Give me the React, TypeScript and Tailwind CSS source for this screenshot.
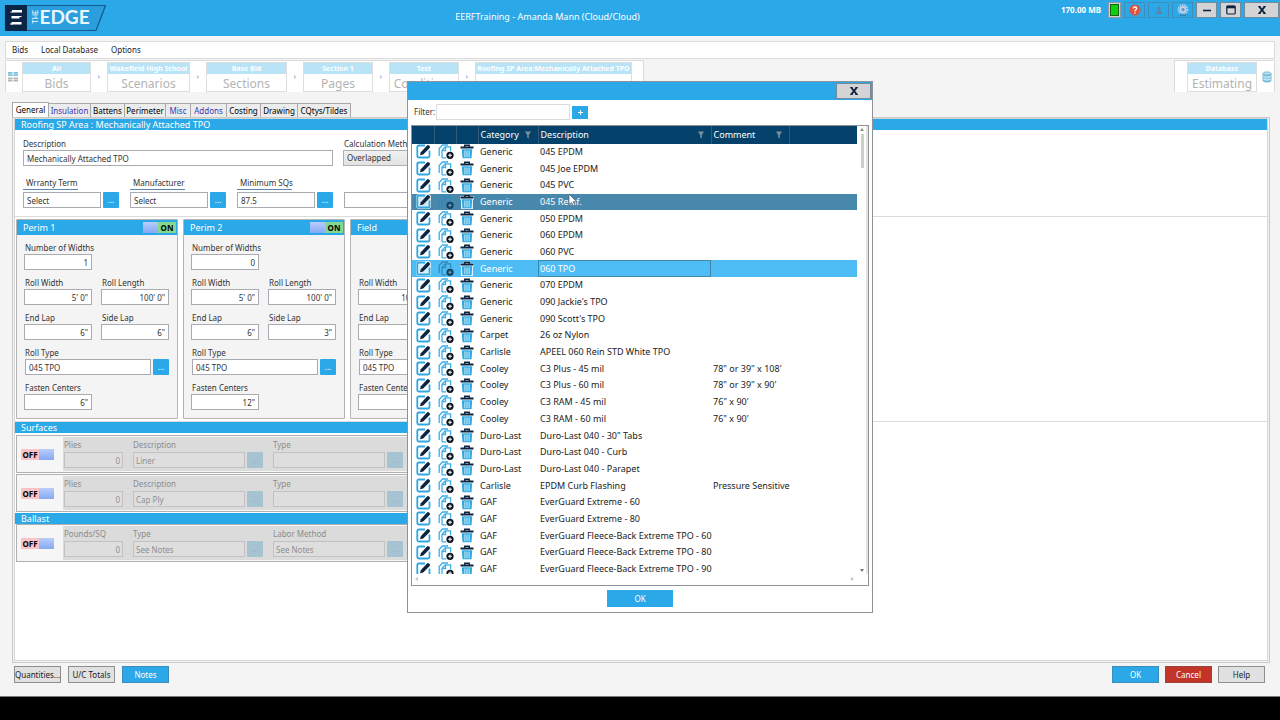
import type { ReactNode } from 'react';

const INPUT =
  'h-4 min-w-0 border border-[#a9abb0] bg-white px-[3px] text-[8px] leading-3 text-[#333] outline-none';

function Logo() {
  return (
    <svg width="104" height="28" viewBox="0 0 104 28" className="shrink-0" role="img" aria-label="The Edge">
      <path d="M1.5 1.5H101.5L92 26.5H1.5Z" fill="#2b9fdd" stroke="#14578a" strokeWidth="1.2" />
      <path d="M1 1H23V27H1Z" fill="#0b2547" />
      <path d="M8 7.200H18M7.500 13.200H15.500M7.500 19.200H17.500" stroke="#fff" strokeWidth="2.600" />
      <path d="M6.500 8H9M14.500 12.500H17.500M6 20H9" stroke="#fff" strokeWidth="1" />
      <text x="35.500" y="19.500" fill="#e9f6fd" fontFamily="Lato, sans-serif" fontWeight="700" fontSize="19">EDGE</text>
      <text transform="rotate(-90 34 19.500)" x="34" y="19.500" fill="#d5edfa" fontFamily="Lato, sans-serif" fontWeight="700" fontSize="7">THE</text>
    </svg>
  );
}

function TitleButton({ label, className, children }: { label: string; className: string; children: ReactNode }) {
  return (
    <button type="button" aria-label={label} className={`flex h-4 items-center justify-center border ${className}`}>
      {children}
    </button>
  );
}

function CloseGlyph() {
  return (
    <svg width="10" height="10" viewBox="0 0 10 10">
      <path d="M2.200 1.500L7.800 8.500M7.800 1.500L2.200 8.500" stroke="#10233f" strokeWidth="2" />
      <path d="M1.200 1.500H3.600M6.400 1.500H8.800M1.200 8.500H3.600M6.400 8.500H8.800" stroke="#10233f" />
    </svg>
  );
}

function TitleBar() {
  const ghost = 'w-[21px] border-[#3c8db9]';
  const solid = 'border-[#6f8b9c] bg-[#d4d4d6]';
  return (
    <header className="flex h-9 items-start bg-[#2ba8e8] text-white">
      <div className="pt-1 pl-1">
        <Logo />
      </div>
      <h1 className="flex-1 pt-[11px] pr-[74px] text-center text-[9px] leading-3">EERFTraining - Amanda Mann (Cloud/Cloud)</h1>
      <div className="flex items-center gap-[3px] pt-[2px] pr-px">
        <span className="pr-1 text-[8px] font-bold">170.00 MB</span>
        <TitleButton label="Connection" className="w-[13px] border-[#8d9aa2] bg-[#cfd6cf]">
          <span className="h-3 w-[9px] border border-[#1d5a1d] bg-[#0bd10b]" />
        </TitleButton>
        <TitleButton label="Alerts" className={ghost}>
          <svg width="12" height="12" viewBox="0 0 12 12">
            <circle cx="6" cy="6" r="5.500" fill="#e0523f" />
            <path d="M4.300 4.600Q4.300 3 6 3T7.700 4.600Q7.700 5.500 6 6.500V7.300M6 8.300V9.500" fill="none" stroke="#fff" strokeWidth="1.300" />
          </svg>
        </TitleButton>
        <TitleButton label="User" className={ghost}>
          <svg width="10" height="10" viewBox="0 0 10 10" fill="#5a84a8">
            <circle cx="5" cy="3.200" r="1.800" />
            <path d="M1.300 9Q2 5.500 5 5.500T8.700 9Z" />
          </svg>
        </TitleButton>
        <TitleButton label="Settings" className={ghost}>
          <svg width="12" height="12" viewBox="0 0 12 12">
            <circle cx="6" cy="5.500" r="4.600" fill="none" stroke="#b9d3ea" strokeWidth="1.600" strokeDasharray="1.600 .9" />
            <circle cx="6" cy="5.500" r="3.800" fill="#b5cfe8" />
            <circle cx="6" cy="5.500" r="1.500" fill="#5794c4" />
            <path d="M3 11H9" stroke="#33648c" />
          </svg>
        </TitleButton>
        <TitleButton label="Minimize" className={`w-[21px] ${solid}`}>
          <svg width="10" height="10" viewBox="0 0 10 10">
            <path d="M1 5.500H9" stroke="#10233f" strokeWidth="1.600" />
          </svg>
        </TitleButton>
        <TitleButton label="Maximize" className={`w-[21px] ${solid}`}>
          <svg width="10" height="10" viewBox="0 0 10 10">
            <rect x=".8" y="1" width="8.400" height="8" rx="1" fill="none" stroke="#10233f" strokeWidth="1.200" />
            <path d="M.8 2H9.200" stroke="#10233f" strokeWidth="2.600" />
          </svg>
        </TitleButton>
        <TitleButton label="Close" className={`w-[35px] ${solid}`}>
          <CloseGlyph />
        </TitleButton>
      </div>
    </header>
  );
}

const CRUMBS = [
  { top: 'All', name: 'Bids', w: 'w-[69px]' },
  { top: 'Wakefield High School', name: 'Scenarios', w: 'w-[83px]' },
  { top: 'Base Bid', name: 'Sections', w: 'w-[81px]' },
  { top: 'Section 1', name: 'Pages', w: 'w-[70px]' },
  { top: 'Test', name: 'Conditions', w: 'w-[70px]' },
  { top: 'Roofing SP Area:Mechanically Attached TPO', name: '', w: 'w-[157px]' },
];

function Crumb({ top, name, w }: { top: string; name: string; w: string }) {
  return (
    <button type="button" className={`${w} flex h-[30px] flex-col overflow-hidden border border-[#dedede] bg-white`}>
      <span className="h-[11px] w-full bg-[#b9e3f6] text-center text-[7px] leading-[11px] font-bold whitespace-nowrap text-white">{top}</span>
      <span className="w-full text-center text-[12px] leading-5 text-[#b3b3b3]">{name}</span>
    </button>
  );
}

function Breadcrumbs() {
  return (
    <div className="flex items-start justify-between">
      <nav aria-label="Breadcrumb" className="flex h-8 items-center border border-b-0 border-[#dcdcdc] bg-white pr-[11px] pl-[2px]">
        <svg width="10" height="10" viewBox="0 0 10 10" className="mr-1">
          <path d="M0 0H4.500V4H0ZM5.500 0H10V4H5.500Z" fill="#7cc0dd" />
          <path d="M0 5.500H4.500V9.500H0ZM5.500 5.500H10V9.500H5.500Z" fill="#b4b4b4" />
          <path d="M0 2H10M0 7.500H10" stroke="#fff" strokeWidth=".5" />
        </svg>
        {CRUMBS.map((c, i) => (
          <div key={c.top} className="flex items-center">
            {i > 0 && (
              <svg width="16" height="6" viewBox="0 0 16 6" aria-hidden="true">
                <path d="M7 1L9.500 3L7 5Z" fill="#c3c9de" />
              </svg>
            )}
            <Crumb {...c} />
          </div>
        ))}
      </nav>
      <div className="flex h-8 items-center border border-b-0 border-[#dcdcdc] bg-white pr-[2px] pl-3">
        <Crumb top="Database" name="Estimating" w="w-[70px]" />
        <svg width="10" height="12" viewBox="0 0 10 12" className="ml-[5px]">
          <path d="M1 2.500V9.500Q1 11 5 11T9 9.500V2.500" fill="#8cc9e4" stroke="#5fa6c8" strokeWidth=".8" />
          <ellipse cx="5" cy="2.500" rx="4" ry="1.600" fill="#b9e0f0" stroke="#5fa6c8" strokeWidth=".8" />
          <path d="M1 5.500Q5 7.500 9 5.500M1 8Q5 10 9 8" fill="none" stroke="#e9f6fb" strokeWidth=".8" />
        </svg>
      </div>
    </div>
  );
}

const TABS = [
  { name: 'General', c: 'h-[15px] w-[37px] border-b-0 bg-white' },
  { name: 'Insulation', c: 'h-[14px] w-[42px] text-[#3a35b5]' },
  { name: 'Battens', c: 'h-[14px] w-[34px]' },
  { name: 'Perimeter', c: 'h-[14px] w-[41px]' },
  { name: 'Misc', c: 'h-[14px] w-[25px] text-[#3a35b5]' },
  { name: 'Addons', c: 'h-[14px] w-[36px] text-[#3a35b5]' },
  { name: 'Costing', c: 'h-[14px] w-[34px]' },
  { name: 'Drawing', c: 'h-[14px] w-[37px]' },
  { name: 'CQtys/Tildes', c: 'h-[14px] w-[53px]' },
];

function Tabs() {
  return (
    <div role="tablist" className="flex items-end">
      {TABS.map((t, i) => (
        <button
          key={t.name}
          type="button"
          role="tab"
          aria-selected={i === 0}
          className={`${t.c} ${i === 0 ? '' : 'border-l-0 bg-[#ececec]'} flex items-center justify-center border border-b-0 border-[#a9a9a9] text-[8px] whitespace-nowrap`}
        >
          {t.name}
        </button>
      ))}
    </div>
  );
}

function SectionBar({ children, className = '' }: { children: ReactNode; className?: string }) {
  return <h2 className={`${className} h-[11px] bg-[#2ba8e8] pl-[6px] text-[9px] leading-[11px] text-white`}>{children}</h2>;
}

function MoreButton({ label, disabled = false }: { label: string; disabled?: boolean }) {
  return (
    <button
      type="button"
      aria-label={label}
      disabled={disabled}
      className={`${disabled ? 'bg-[#a6c3d2] text-[#8fb4c6]' : 'bg-[#2ba8e8] text-white'} ml-[2px] h-4 w-4 shrink-0 rounded-[1px] text-center text-[8px] leading-4`}
    >
      ...
    </button>
  );
}

function LookupField({ label, value }: { label: string; value: string }) {
  return (
    <label className="block">
      <span className="block h-[13px] w-[55px] border-b border-[#5d87ae] pl-[3px] text-[8px] leading-3 whitespace-nowrap">{label}</span>
      <span className="mt-[2px] flex">
        <input className={`${INPUT} w-[78px]`} defaultValue={value} />
        <MoreButton label={`Choose ${label}`} />
      </span>
    </label>
  );
}

function NumberField({ label, value }: { label: string; value: string }) {
  return (
    <label className="block w-[68px]">
      <span className="block pl-px text-[8px] leading-3 whitespace-nowrap">{label}</span>
      <input className={`${INPUT} block w-full text-right`} defaultValue={value} />
    </label>
  );
}

function Switch({ on, label }: { on: boolean; label: string }) {
  const knob = <span className="h-full w-[15px] rounded-[1px] bg-linear-to-b from-[#b9cdfb] to-[#86a9f3]" />;
  return (
    <button
      type="button"
      role="switch"
      aria-checked={on}
      aria-label={label}
      className={`${on ? 'bg-[#84d88f]' : 'bg-[#f9c3c8]'} flex h-[11px] w-[33px] items-center justify-between text-[8px] leading-[11px] font-bold text-black`}
    >
      {on && knob}
      <span className="flex-1 text-center">{on ? 'ON' : 'OFF'}</span>
      {!on && knob}
    </button>
  );
}

type Zone = { name: string; widths?: string; rollWidth: string; rollLength: string; endLap: string; sideLap: string; centers: string };

const ZONES: Zone[] = [
  { name: 'Perim 1', widths: '1', rollWidth: `5' 0"`, rollLength: `100' 0"`, endLap: '6"', sideLap: '6"', centers: '6"' },
  { name: 'Perim 2', widths: '0', rollWidth: `5' 0"`, rollLength: `100' 0"`, endLap: '6"', sideLap: '3"', centers: '12"' },
  { name: 'Field', rollWidth: `10' 0"`, rollLength: `100' 0"`, endLap: '6"', sideLap: '6"', centers: '12"' },
];

function ZonePanel({ zone }: { zone: Zone }) {
  return (
    <section className="w-[162px] shrink-0 rounded-[1px] border border-[#b5b5b5] bg-[#f4f4f4]">
      <div className="flex h-[15px] items-center justify-between bg-[#2ba8e8] pr-px pl-[6px]">
        <h3 className="text-[9px] leading-[15px] text-white">{zone.name}</h3>
        {zone.widths && <Switch on label={zone.name} />}
      </div>
      <div className="grid grid-cols-[68px_68px] gap-x-[9px] gap-y-[7px] px-[7px] pt-[7px] pb-2">
        <div className="col-span-2 h-7">{zone.widths && <NumberField label="Number of Widths" value={zone.widths} />}</div>
        <NumberField label="Roll Width" value={zone.rollWidth} />
        <NumberField label="Roll Length" value={zone.rollLength} />
        <NumberField label="End Lap" value={zone.endLap} />
        <NumberField label="Side Lap" value={zone.sideLap} />
        <label className="col-span-2 block">
          <span className="block pl-px text-[8px] leading-3">Roll Type</span>
          <span className="flex pl-px">
            <input className={`${INPUT} flex-1`} defaultValue="045 TPO" />
            <MoreButton label="Choose roll type" />
          </span>
        </label>
        <NumberField label="Fasten Centers" value={zone.centers} />
      </div>
    </section>
  );
}

function DisabledRow({ name, labels, values }: { name: string; labels: string[]; values: string[] }) {
  const box = 'h-4 min-w-0 border border-[#c2c2c2] bg-[#dedede] px-[2px] text-[8px] text-[#8f8f8f]';
  return (
    <div className="ml-px flex h-[38px] items-center border border-r-0 border-[#b0b0b0] bg-[#f6f6f6] pl-1">
      <Switch on={false} label={name} />
      <fieldset disabled className="ml-[9px] flex h-[34px] flex-1 bg-[#dbdbdb] pt-px pl-px text-[8px] leading-3 text-[#8c8c8c]">
        <label className="mr-[10px] block w-[59px]">
          <span className="block leading-[14px]">{labels[0]}</span>
          <input className={`${box} block w-full text-right`} defaultValue={values[0]} />
        </label>
        {[1, 2].map((i) => (
          <label key={i} className="mr-[10px] block">
            <span className="block leading-[14px]">{labels[i]}</span>
            <span className="flex">
              <input className={`${box} w-[112px]`} defaultValue={values[i]} />
              <MoreButton label={`Choose ${labels[i]}`} disabled />
            </span>
          </label>
        ))}
      </fieldset>
    </div>
  );
}

function GeneralTab() {
  return (
    <div className="flex flex-1 flex-col border border-[#c9c9c9] bg-[#f4f4f4] px-px pb-px">
      <div className="flex-1 border border-[#d6d6d6] bg-white text-[#333]">
        <SectionBar>Roofing SP Area : Mechanically Attached TPO</SectionBar>
        <div className="flex items-start gap-[10px] pt-2 pl-2">
          <label className="block w-[310px]">
            <span className="block text-[8px] leading-3">Description</span>
            <input className={`${INPUT} block w-full`} defaultValue="Mechanically Attached TPO" />
          </label>
          <label className="block w-[110px]">
            <span className="block pl-px text-[8px] leading-3">Calculation Method</span>
            <select className="block h-4 w-full appearance-none border border-[#b0b0b0] bg-linear-to-b from-[#f0f0f0] to-[#e2e2e2] px-[3px] text-[8px] leading-3">
              <option>Overlapped</option>
            </select>
          </label>
        </div>
        <div className="flex items-end gap-[11px] pt-[11px] pb-2 pl-[8px]">
          <LookupField label="Wrranty Term" value="Select" />
          <LookupField label="Manufacturer" value="Select" />
          <LookupField label="Minimum SQs" value="87.5" />
          <input aria-label="Minimum SQs note" className={`${INPUT} w-[109px]`} />
        </div>
        <div className="flex gap-[5px] border-y border-[#dcdcdc] pt-[2px] pb-[2px] pl-px">
          {ZONES.map((z) => (
            <ZonePanel key={z.name} zone={z} />
          ))}
        </div>
        <div className="w-1/2">
          <SectionBar>Surfaces</SectionBar>
          <div className="mt-[2px] flex flex-col gap-px">
            <DisabledRow name="Liner" labels={['Plies', 'Description', 'Type']} values={['0', 'Liner', '']} />
            <DisabledRow name="Cap Ply" labels={['Plies', 'Description', 'Type']} values={['0', 'Cap Ply', '']} />
          </div>
          <SectionBar className="mt-px">Ballast</SectionBar>
          <DisabledRow name="Ballast" labels={['Pounds/SQ', 'Type', 'Labor Method']} values={['0', 'See Notes', 'See Notes']} />
        </div>
      </div>
    </div>
  );
}

const ROWS: [string, string, string?][] = [
  ['Generic', '045 EPDM'],
  ['Generic', '045 Joe EPDM'],
  ['Generic', '045 PVC'],
  ['Generic', '045 Reinf.'],
  ['Generic', '050 EPDM'],
  ['Generic', '060 EPDM'],
  ['Generic', '060 PVC'],
  ['Generic', '060 TPO'],
  ['Generic', '070 EPDM'],
  ['Generic', "090 Jackie's TPO"],
  ['Generic', "090 Scott's TPO"],
  ['Carpet', '26 oz Nylon'],
  ['Carlisle', 'APEEL 060 Rein STD White TPO'],
  ['Cooley', 'C3 Plus - 45 mil', `78" or 39" x 108'`],
  ['Cooley', 'C3 Plus - 60 mil', `78" or 39" x 90'`],
  ['Cooley', 'C3 RAM - 45 mil', `76" x 90'`],
  ['Cooley', 'C3 RAM - 60 mil', `76" x 90'`],
  ['Duro-Last', 'Duro-Last 040 - 30" Tabs'],
  ['Duro-Last', 'Duro-Last 040 - Curb'],
  ['Duro-Last', 'Duro-Last 040 - Parapet'],
  ['Carlisle', 'EPDM Curb Flashing', 'Pressure Sensitive'],
  ['GAF', 'EverGuard Extreme - 60'],
  ['GAF', 'EverGuard Extreme - 80'],
  ['GAF', 'EverGuard Fleece-Back Extreme TPO - 60'],
  ['GAF', 'EverGuard Fleece-Back Extreme TPO - 80'],
  ['GAF', 'EverGuard Fleece-Back Extreme TPO - 90'],
];

const HOVERED = 3;
const SELECTED = 7;

function EditIcon({ lit }: { lit: boolean }) {
  return (
    <svg width="15" height="15" viewBox="0 0 15 15" className="block">
      {lit && <path d="M2 0H13L15 2V13L13 15H2L0 13V2Z" fill="#fff" fillOpacity=".8" />}
      <path d="M9 1.500H2.800Q1.300 1.500 1.300 3V12Q1.300 13.500 2.800 13.500H12Q13.500 13.500 13.500 12V6.500" fill="none" stroke="#2fa8e2" strokeWidth="1.800" />
      <path d="M4 11.300L4.800 8.200L11 1.500Q12 .6 13.300 1.700T13.700 4L7.200 10.400Z" fill="#0d2440" />
    </svg>
  );
}

function CopyIcon({ lit }: { lit: boolean }) {
  return (
    <svg width="16" height="15" viewBox="0 0 16 15" className="block">
      <g fill="none" stroke={lit ? '#3389ba' : '#3aaee6'} strokeWidth="1.300">
        <path d="M1.200 12V4.500L4.500 1H10" />
        <path d="M4 13.800V6.200L7.200 2.800H12.600V7.200M4 13.800H8.200" />
        <path d="M7.500 3V6.500H4.200" />
      </g>
      <circle cx="12" cy="11.300" r="3.600" fill={lit ? '#123e5c' : '#0c1420'} />
      <path d="M12 9.400V13.200M10.100 11.300H13.900" stroke={lit ? '#5fa4c8' : '#fff'} strokeWidth="1.100" />
    </svg>
  );
}

function TrashIcon({ lit }: { lit: boolean }) {
  return (
    <svg width="14" height="15" viewBox="0 0 14 15" className="block">
      {lit && <path d="M0 2H4V0H10V2H14V5.500H13V15H1V5.500H0Z" fill="#fff" fillOpacity=".85" />}
      <path d="M1.800 5.200H12.200L11.500 14.300H2.500Z" fill="#2fa8e2" />
      <path d="M4.900 6.500V13.300M7 6.500V13.300M9.100 6.500V13.300" stroke="#e4f5fd" strokeWidth=".9" />
      <path d="M.5 3.500H13.500" stroke="#0d2440" strokeWidth="2" />
      <path d="M4.800 3V1.200H9.200V3" fill="none" stroke="#0d2440" strokeWidth="1.500" />
    </svg>
  );
}

function FilterIcon() {
  return (
    <svg width="6" height="8" viewBox="0 0 6 8" className="block">
      <path d="M0 .5H6L3.800 4V7.500L2.200 6.500V4Z" fill="#7c8f9e" />
    </svg>
  );
}

function MaterialsTable() {
  const head = 'border-r border-[#34597a] p-0 pl-[2px] font-normal';
  return (
    <table className="h-[452px] w-full table-fixed border-collapse text-left text-[9px] leading-3 text-[#222]">
      <colgroup>
        <col className="w-[22px]" />
        <col className="w-[22px]" />
        <col className="w-[22px]" />
        <col className="w-[60px]" />
        <col className="w-[173px]" />
        <col className="w-[78px]" />
        <col />
      </colgroup>
      <thead>
        <tr className="h-[18px] bg-[#04426b] text-white">
          <th className={head} aria-label="Edit" />
          <th className={head} aria-label="Copy" />
          <th className={head} aria-label="Delete" />
          {['Category', 'Description', 'Comment'].map((h) => (
            <th key={h} className={head}>
              <span className="flex items-center justify-between pr-[7px]">
                {h}
                <FilterIcon />
              </span>
            </th>
          ))}
          <th className="p-0" />
        </tr>
      </thead>
      <tbody>
        {ROWS.map(([category, description, comment], i) => {
          const lit = i === HOVERED || i === SELECTED;
          const tone = i === HOVERED ? 'bg-[#4888ad] text-white' : i === SELECTED ? 'bg-[#4ebdf5] text-white' : '';
          return (
            <tr key={description} className={tone}>
              <td className="p-0 pl-1">
                <button type="button" aria-label={`Edit ${description}`} className="block">
                  <EditIcon lit={lit} />
                </button>
              </td>
              <td className="p-0 pl-1">
                <button type="button" aria-label={`Copy ${description}`} className="block">
                  <CopyIcon lit={lit} />
                </button>
              </td>
              <td className="p-0 pl-1">
                <button type="button" aria-label={`Delete ${description}`} className="block">
                  <TrashIcon lit={lit} />
                </button>
              </td>
              <td className="p-0 pl-[2px]">{category}</td>
              <td className={`${i === SELECTED ? 'outline -outline-offset-1 outline-[#3f86ab]' : ''} p-0 pl-[2px] whitespace-nowrap`}>{description}</td>
              <td className="p-0 pl-[2px] whitespace-nowrap" colSpan={2}>
                {comment}
              </td>
            </tr>
          );
        })}
      </tbody>
    </table>
  );
}

function MaterialDialog() {
  return (
    <div role="dialog" aria-label="Materials" className="relative w-[466px] border border-[#8f9396] bg-white">
      <div className="flex h-[18px] items-center justify-end bg-[#2ba8e8] pr-px">
        <button type="button" aria-label="Close" className="flex h-4 w-[35px] items-center justify-center border border-[#6f8b9c] bg-[#d4d4d6]">
          <CloseGlyph />
        </button>
      </div>
      <div className="px-[3px] pb-[3px]">
        <div className="flex h-[25px] items-center pl-[3px] text-[8px] text-[#333]">
          <label htmlFor="filter" className="w-[22px]">
            Filter:
          </label>
          <input id="filter" className="h-4 w-[134px] border border-[#dcdcdc] bg-white px-[3px] outline-none" />
          <button type="button" aria-label="Add filter" className="ml-[2px] flex h-[13px] w-4 items-center justify-center bg-[#2ba8e8]">
            <svg width="5" height="5" viewBox="0 0 5 5">
              <path d="M2.500 0V5M0 2.500H5" stroke="#fff" />
            </svg>
          </button>
        </div>
        <div className="border border-[#8f9396]">
          <div className="flex h-[448px]">
            <div className="flex-1 overflow-hidden">
              <MaterialsTable />
            </div>
            <div className="flex w-[11px] flex-col items-center justify-between border-r-2 border-[#e4e4e4] py-[2px] pl-px">
              <div className="flex flex-col items-center gap-[3px]">
                <svg width="4" height="3" viewBox="0 0 4 3">
                  <path d="M0 3L2 0L4 3Z" fill="#8b8b8b" />
                </svg>
                <span className="h-[34px] w-[3px] bg-[#cdcdcd]" />
              </div>
              <svg width="4" height="3" viewBox="0 0 4 3">
                <path d="M0 0L2 3L4 0Z" fill="#777" />
              </svg>
            </div>
          </div>
          <div className="flex h-[11px] items-center justify-between pr-[14px] pl-[3px]">
            <svg width="3" height="4" viewBox="0 0 3 4">
              <path d="M3 0L0 2L3 4Z" fill="#c5c5c5" />
            </svg>
            <svg width="3" height="4" viewBox="0 0 3 4">
              <path d="M0 0L3 2L0 4Z" fill="#c5c5c5" />
            </svg>
          </div>
        </div>
        <div className="flex justify-center pt-1 pb-[2px]">
          <button type="button" className="h-[17px] w-[66px] bg-[#2ba8e8] text-[8px] leading-[17px] text-white">
            OK
          </button>
        </div>
      </div>
      <svg width="10" height="14" viewBox="0 0 10 14" className="absolute top-[111px] left-[160px]">
        <path d="M1 1V11.500L3.500 9.300L5.200 13L6.800 12.200L5.200 8.700H8.500Z" fill="#fff" stroke="#555" strokeWidth=".7" />
      </svg>
    </div>
  );
}

function FooterButton({ children, className }: { children: string; className: string }) {
  return (
    <button type="button" className={`${className} h-[17px] w-[47px] border text-[8px] leading-[14px] whitespace-nowrap`}>
      {children}
    </button>
  );
}

export default function App() {
  const plain = 'border-[#8e8e8e] bg-[#e1e1e1] text-[#222]';
  const blue = 'border-[#3d8dbb] bg-[#2ba8e8] text-white';
  return (
    <div className="flex min-h-screen flex-col bg-black font-['Noto_Sans',sans-serif]">
      <div className="relative flex flex-1 flex-col border-b border-[#777] bg-[#f4f4f4]">
        <TitleBar />
        <div className="flex flex-1 flex-col pr-[5px] pl-[5px]">
          <nav aria-label="Main menu" className="mt-[5px] mb-px flex h-[18px] items-center gap-[13px] border border-[#dcdcdc] bg-white pl-[6px] text-[8px] text-[#222]">
            <button type="button">Bids</button>
            <button type="button">Local Database</button>
            <button type="button">Options</button>
          </nav>
          <Breadcrumbs />
          <main className="flex flex-1 flex-col pt-[10px] pr-[5px] pl-[7px]">
            <Tabs />
            <GeneralTab />
            <div className="flex justify-between pt-[3px] pr-[5px] pb-[13px] pl-[2px]">
              <div className="flex gap-[7px]">
                <FooterButton className={plain}>Quantities...</FooterButton>
                <FooterButton className={plain}>U/C Totals</FooterButton>
                <FooterButton className={blue}>Notes</FooterButton>
              </div>
              <div className="flex gap-[6px]">
                <FooterButton className={blue}>OK</FooterButton>
                <FooterButton className="border-[#99453e] bg-[#c23428] text-white">Cancel</FooterButton>
                <FooterButton className={plain}>Help</FooterButton>
              </div>
            </div>
          </main>
        </div>
        <div className="absolute inset-0 flex items-center justify-center pb-[3px]">
          <MaterialDialog />
        </div>
      </div>
      <div className="h-[23px]" />
    </div>
  );
}
